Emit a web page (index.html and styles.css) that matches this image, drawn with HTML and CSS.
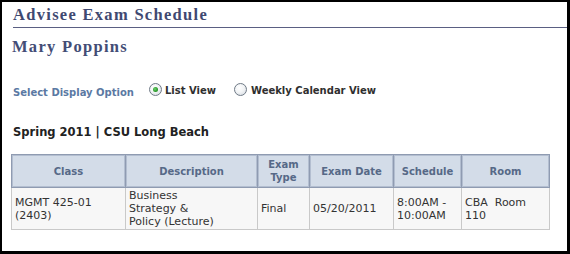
FILE: index.html
```
<!DOCTYPE html>
<html>
<head>
<meta charset="utf-8">
<link rel="stylesheet" href="styles.css">
</head>
<body>
<div class="frame">
  <h1 class="page-title">Advisee Exam Schedule</h1>
  <h2 class="student">Mary Poppins</h2>
  <div class="options">
    <span class="opt-label">Select Display Option</span>
    <span class="radio checked"></span>
    <span class="opt-text">List View</span>
    <span class="radio second"></span>
    <span class="opt-text">Weekly Calendar View</span>
  </div>
  <div class="term">Spring 2011 | CSU Long Beach</div>
  <table class="grid">
    <colgroup>
      <col class="c1"><col class="c2"><col class="c3"><col class="c4"><col class="c5"><col class="c6">
    </colgroup>
    <thead>
      <tr>
        <th>Class</th>
        <th>Description</th>
        <th>Exam<br>Type</th>
        <th>Exam Date</th>
        <th>Schedule</th>
        <th>Room</th>
      </tr>
    </thead>
    <tbody>
      <tr>
        <td>MGMT 425-01<br>(2403)</td>
        <td>Business<br>Strategy &amp;<br>Policy (Lecture)</td>
        <td>Final</td>
        <td>05/20/2011</td>
        <td>8:00AM -<br>10:00AM</td>
        <td>CBA&nbsp; Room<br>110</td>
      </tr>
    </tbody>
  </table>
</div>
</body>
</html>
```
FILE: styles.css
```
html, body {
  margin: 0;
  padding: 0;
  background: #000;
}
.frame {
  box-sizing: border-box;
  width: 570px;
  height: 254px;
  border-style: solid;
  border-color: #000;
  border-width: 2px 3px 3px 2px;
  background: #fff;
  overflow: hidden;
  font-family: "DejaVu Sans", Verdana, sans-serif;
}
.page-title {
  margin: 0 0 0 11px;
  padding: 3px 0 2px 0;
  font-family: "Liberation Serif", "Times New Roman", serif;
  font-size: 16.5px;
  line-height: 20px;
  font-weight: bold;
  letter-spacing: 1.3px;
  color: #3f4971;
  border-bottom: 1px solid #5a5f82;
}
.student {
  margin: 9px 0 0 10px;
  font-family: "Liberation Serif", "Times New Roman", serif;
  font-size: 16.5px;
  line-height: 20px;
  font-weight: bold;
  letter-spacing: 1.3px;
  color: #434d76;
}
.options {
  display: flex;
  align-items: flex-start;
  margin: 28px 0 0 11px;
  height: 14px;
  font-size: 10px;
  line-height: 14px;
  font-weight: bold;
}
.opt-label {
  color: #5b79a3;
  margin-top: 1px;
  margin-right: 15px;
}
.opt-text {
  color: #2f2f2f;
  margin-top: -1px;
}
.radio {
  box-sizing: border-box;
  width: 13px;
  height: 13px;
  border-radius: 50%;
  border: 1px solid #6f7a86;
  background: radial-gradient(circle at 40% 35%, #ffffff 0%, #f2f4f6 45%, #cfd5dc 100%);
  margin-top: -2px;
  margin-right: 3px;
  position: relative;
}
.radio.checked::after {
  content: "";
  position: absolute;
  left: 3px;
  top: 3px;
  width: 5px;
  height: 5px;
  border-radius: 50%;
  background: radial-gradient(circle at 40% 40%, #6fd06f 0%, #2a9a2a 60%, #1d7a1d 100%);
}
.radio.second {
  margin-left: 18px;
  margin-right: 4px;
}
.term {
  margin: 26px 0 0 11px;
  font-size: 11.5px;
  line-height: 15px;
  font-weight: bold;
  color: #222;
}
.grid {
  margin: 14px 0 0 9px;
  border-collapse: collapse;
  table-layout: fixed;
  width: 538px;
}
.c1 { width: 114px; }
.c2 { width: 132px; }
.c3 { width: 52px; }
.c4 { width: 84px; }
.c5 { width: 68px; }
.c6 { width: 88px; }
.grid th {
  height: 26px;
  padding: 3px 2px;
  background: #d3dce8;
  border: 1px solid #8f9bb1;
  box-shadow: inset 0 0 0 1px #b3bed0;
  color: #566987;
  font-size: 10px;
  line-height: 13px;
  font-weight: bold;
  text-align: center;
  vertical-align: middle;
}
.grid td {
  padding: 1px 3px;
  background: #f7f7f7;
  border: 1px solid #c9c9c9;
  color: #333;
  font-size: 11px;
  line-height: 13px;
  text-align: left;
  vertical-align: middle;
}
```
